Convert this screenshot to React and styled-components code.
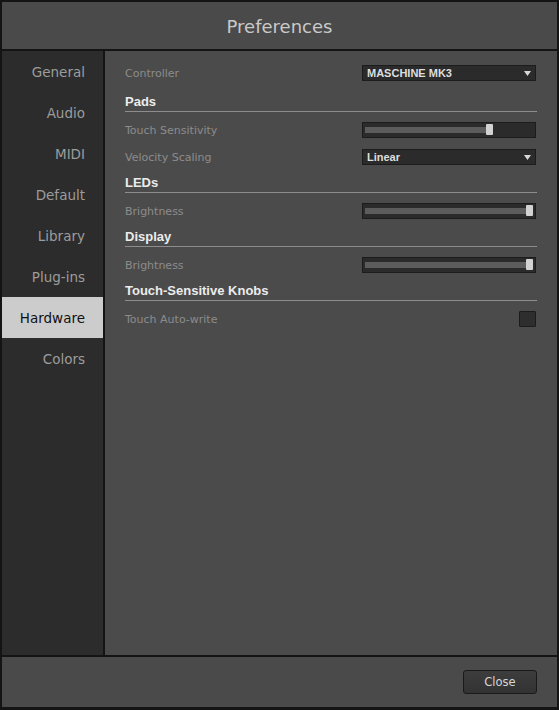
import React, { useState } from 'react'
import styled, { createGlobalStyle } from 'styled-components'

const GlobalStyle = createGlobalStyle`
  html, body {
    margin: 0;
    padding: 0;
    background: #141414;
  }
  * { box-sizing: border-box; }
`

const pages = ['General', 'Audio', 'MIDI', 'Default', 'Library', 'Plug-ins', 'Hardware', 'Colors']

const Select = ({ value }) => (
  <Dropdown>
    <DropdownText>{value}</DropdownText>
    <Arrow viewBox="0 0 7 5">
      <path d="M0 0 H7 L3.5 5 Z" fill="#d8d8d8" />
    </Arrow>
  </Dropdown>
)

const Slider = ({ value }) => (
  <SliderBox>
    <SliderInner>
      <SliderFill style={{ width: `calc((100% - 7px) * ${value})` }} />
      <Thumb />
    </SliderInner>
  </SliderBox>
)

const App = () => {
  const [ page, setPage ] = useState('Hardware')

  return (
  <>
    <GlobalStyle />
    <Window>
      <Header>Preferences</Header>
      <Main>
        <Sidebar>
          {pages.map(p => (
            <NavItem key={p} active={p === page} onClick={() => setPage(p)}>{p}</NavItem>
          ))}
        </Sidebar>
        <Content>
          <Row first>
            <Label>Controller</Label>
            <Select value="MASCHINE MK3" />
          </Row>
          <Heading>Pads</Heading>
          <Row>
            <Label>Touch Sensitivity</Label>
            <Slider value={0.75} />
          </Row>
          <Row>
            <Label>Velocity Scaling</Label>
            <Select value="Linear" />
          </Row>
          <Heading>LEDs</Heading>
          <Row>
            <Label>Brightness</Label>
            <Slider value={1} />
          </Row>
          <Heading>Display</Heading>
          <Row>
            <Label>Brightness</Label>
            <Slider value={1} />
          </Row>
          <Heading>Touch-Sensitive Knobs</Heading>
          <Row>
            <Label>Touch Auto-write</Label>
            <Checkbox />
          </Row>
        </Content>
      </Main>
      <Footer>
        <CloseBtn>Close</CloseBtn>
      </Footer>
    </Window>
  </>
  )
}

export default App

const Window = styled.div`
  width: 559px;
  height: 710px;
  padding: 2px 2px 3px 2px;
  display: flex;
  flex-direction: column;
  gap: 2px;
  background: #141414;
  font-family: "DejaVu Sans", sans-serif;
`
const Header = styled.div`
  height: 47px;
  background: #4a4a4a;
  color: #c9c9c9;
  font-size: 18px;
  display: flex;
  align-items: center;
  justify-content: center;
  padding-top: 1px;
`
const Main = styled.div`
  flex: 1;
  display: flex;
  gap: 2px;
  min-height: 0;
`
const Sidebar = styled.div`
  width: 101px;
  background: #2c2c2c;
  display: flex;
  flex-direction: column;
`
const NavItem = styled.div`
  height: 41px;
  display: flex;
  align-items: center;
  justify-content: flex-end;
  padding-right: 18px;
  font-size: 13.5px;
  color: ${p => p.active ? '#111' : '#9c9c9c'};
  background: ${p => p.active ? '#cccccc' : 'transparent'};
  cursor: default;
`
const Content = styled.div`
  flex: 1;
  background: #4b4b4b;
  padding: 14px 20px 0 20px;
  display: flex;
  flex-direction: column;
`
const Row = styled.div`
  height: 16px;
  flex-shrink: 0;
  display: flex;
  align-items: center;
  justify-content: space-between;
  margin-bottom: ${p => p.first ? '14px' : '11px'};
`
const Label = styled.span`
  font-size: 11px;
  color: #8b8b8b;
`
const Heading = styled.div`
  flex-shrink: 0;
  margin-top: -2px;
  margin-bottom: 10px;
  height: 19px;
  line-height: 17px;
  border-bottom: 1px solid #8d8d8d;
  font-family: "Liberation Sans", Arial, sans-serif;
  font-weight: bold;
  font-size: 13px;
  color: #ececec;
`
const Dropdown = styled.div`
  width: 174px;
  height: 16px;
  margin-right: 1px;
  background: #2b2b2b;
  border: 1px solid #1c1c1c;
  display: flex;
  align-items: center;
  justify-content: space-between;
  padding: 0 4px 0 4px;
`
const DropdownText = styled.span`
  font-family: "Liberation Sans", Arial, sans-serif;
  font-weight: bold;
  font-size: 11px;
  color: #dedede;
`
const Arrow = styled.svg`
  width: 7px;
  height: 5px;
`
const SliderBox = styled.div`
  width: 174px;
  height: 16px;
  margin-right: 1px;
  background: #2b2b2b;
  border: 1px solid #1c1c1c;
  padding: 1px 2px 2px 2px;
`
const SliderInner = styled.div`
  height: 100%;
  display: flex;
  align-items: center;
`
const SliderFill = styled.div`
  height: 6px;
  background: #5c5c5c;
`
const Thumb = styled.div`
  width: 7px;
  height: 11px;
  background: #d2d2d2;
  border-radius: 1px;
`
const Checkbox = styled.div`
  width: 17px;
  height: 16px;
  margin-right: 1px;
  background: #2e2e2e;
  border: 1px solid #1c1c1c;
  border-radius: 1px;
`
const Footer = styled.div`
  height: 50px;
  background: #4a4a4a;
  display: flex;
  align-items: center;
  justify-content: flex-end;
  padding-right: 20px;
`
const CloseBtn = styled.button`
  width: 74px;
  height: 24px;
  border: 1px solid #1a1a1a;
  border-radius: 3px;
  background: linear-gradient(#3d3d3d, #323232);
  color: #d6d6d6;
  font-family: "DejaVu Sans", sans-serif;
  font-size: 11.5px;
  padding: 0;
`
